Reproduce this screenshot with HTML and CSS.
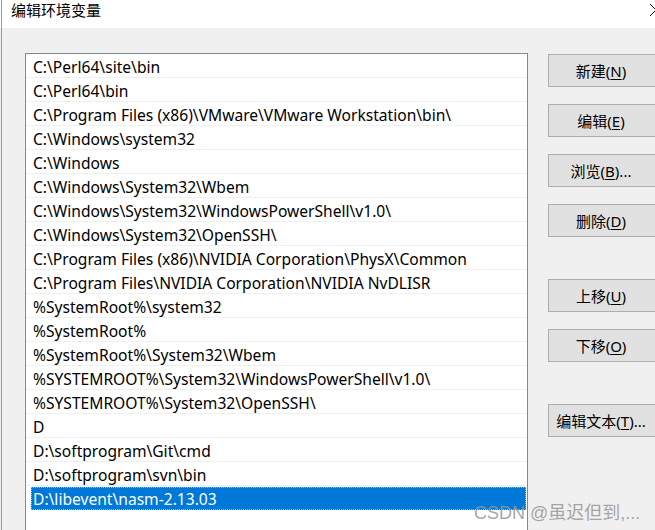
FILE: index.html
```html
<!DOCTYPE html>
<html lang="zh-CN">
<head>
<meta charset="utf-8">
<title>编辑环境变量</title>
<link rel="stylesheet" href="styles.css">
</head>
<body>
<div class="window">
  <div class="titlebar">
    <span class="title">编辑环境变量</span>
    <svg class="close" width="12" height="14" viewBox="0 0 12 14"><path d="M0 1 L6 7 L0 13" fill="none" stroke="#111" stroke-width="1"/></svg>
  </div>
  <div class="content">
    <div class="list">
      <div class="row">C:\Perl64\site\bin</div>
      <div class="row">C:\Perl64\bin</div>
      <div class="row">C:\Program Files (x86)\VMware\VMware Workstation\bin\</div>
      <div class="row">C:\Windows\system32</div>
      <div class="row">C:\Windows</div>
      <div class="row">C:\Windows\System32\Wbem</div>
      <div class="row">C:\Windows\System32\WindowsPowerShell\v1.0\</div>
      <div class="row">C:\Windows\System32\OpenSSH\</div>
      <div class="row">C:\Program Files (x86)\NVIDIA Corporation\PhysX\Common</div>
      <div class="row">C:\Program Files\NVIDIA Corporation\NVIDIA NvDLISR</div>
      <div class="row">%SystemRoot%\system32</div>
      <div class="row">%SystemRoot%</div>
      <div class="row">%SystemRoot%\System32\Wbem</div>
      <div class="row">%SYSTEMROOT%\System32\WindowsPowerShell\v1.0\</div>
      <div class="row">%SYSTEMROOT%\System32\OpenSSH\</div>
      <div class="row">D</div>
      <div class="row">D:\softprogram\Git\cmd</div>
      <div class="row">D:\softprogram\svn\bin</div>
      <div class="row selected"><span class="sel">D:\libevent\nasm-2.13.03</span></div>
    </div>
    <div class="buttons">
      <div class="group">
        <button class="btn">新建(<u>N</u>)</button>
        <button class="btn">编辑(<u>E</u>)</button>
        <button class="btn">浏览(<u>B</u>)...</button>
        <button class="btn">删除(<u>D</u>)</button>
      </div>
      <div class="group">
        <button class="btn">上移(<u>U</u>)</button>
        <button class="btn">下移(<u>O</u>)</button>
      </div>
      <div class="group">
        <button class="btn">编辑文本(<u>T</u>)...</button>
      </div>
    </div>
  </div>
  <div class="edge"></div>
  <div class="watermark">CSDN @虽迟但到,...</div>
</div>
</body>
</html>
```
FILE: styles.css
```css
html, body {
  margin: 0;
  padding: 0;
  width: 655px;
  height: 530px;
  overflow: hidden;
  background: #f0f0f0;
}
.window {
  position: relative;
  width: 655px;
  height: 530px;
  font-family: "Noto Sans", "Noto Sans CJK SC", sans-serif;
  color: #000;
}
.titlebar {
  height: 28px;
  background: #fff;
  display: flex;
  align-items: center;
  padding-left: 11px;
  box-sizing: border-box;
  position: relative;
}
.title {
  font-family: "Noto Sans CJK SC", sans-serif;
  font-size: 15px;
  line-height: 20px;
  margin-top: -8px;
}
.close {
  position: absolute;
  left: 650px;
  top: 3px;
}
.content {
  display: flex;
  padding: 25px 0 0 25px;
  background: #f0f0f0;
  height: 502px;
  box-sizing: border-box;
}
.list {
  width: 503px;
  flex: none;
  height: 500px;
  box-sizing: border-box;
  background: #fff;
  border: 1px solid #828790;
  border-bottom: none;
}
.row {
  height: 24px;
  box-sizing: border-box;
  border-bottom: 1px solid #f0f0f0;
  padding-left: 7px;
  padding-top: 3px;
  font-size: 15.6px;
  line-height: 20px;
  white-space: nowrap;
  overflow: hidden;
}
.row.selected {
  padding-left: 5px;
  border-bottom: none;
  padding-top: 1px;
}
.sel {
  display: block;
  height: 23px;
  box-sizing: border-box;
  background: #0078d7;
  color: #fff;
  padding: 2px 0 0 2px;
  line-height: 20px;
  margin-right: 1px;
  outline: 1px dotted #f2a54a;
  outline-offset: -1px;
}
.buttons {
  margin-left: 20px;
  padding-top: 1px;
  display: flex;
  flex-direction: column;
  gap: 42px;
}
.group {
  display: flex;
  flex-direction: column;
  gap: 17px;
}
.btn {
  width: 110px;
  height: 33px;
  box-sizing: border-box;
  background: #e1e1e1;
  border: 1px solid #adadad;
  margin: 0;
  padding: 0 4px 1px 0;
  font-family: "Noto Sans", "Noto Sans CJK SC", sans-serif;
  font-size: 15px;
  color: #000;
  text-align: center;
}
.btn u {
  text-underline-offset: 2px;
}
.edge {
  position: absolute;
  left: 1px;
  top: 0;
  width: 1px;
  height: 530px;
  background: #9a9a9a;
}
.watermark {
  position: absolute;
  left: 474px;
  top: 498px;
  font-family: "Liberation Sans", "Noto Sans CJK SC", sans-serif;
  font-size: 18px;
  color: rgba(150, 150, 150, 0.85);
  white-space: nowrap;
}
```
